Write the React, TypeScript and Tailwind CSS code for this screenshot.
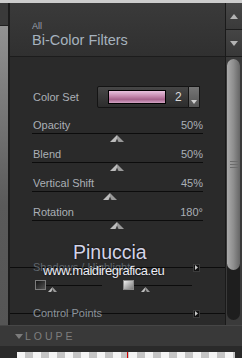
import React from "react";

function Tri({ w = 14, h = 7 }: { w?: number; h?: number }) {
  const m = w / 2;
  return (
    <svg width={w} height={h} viewBox={`0 0 ${w} ${h}`} className="block">
      <polygon points={`0,${h} ${m},0 ${m},${h}`} fill="#bcbcbc" />
      <polygon points={`${m},0 ${w},${h} ${m},${h}`} fill="#999999" />
      <polygon points={`${m - 1.5},${h} ${m},${h / 2} ${m + 1.5},${h}`} fill="#3a3a3a" />
    </svg>
  );
}

function Play() {
  return (
    <div className="flex h-[8px] w-[7px] items-center justify-center border border-[#3c3c3c] bg-[#121212]">
      <svg width="3" height="5" viewBox="0 0 3 5" className="block">
        <polygon points="0,0 3,2.5 0,5" fill="#c8c8c8" />
      </svg>
    </div>
  );
}

function SliderRow({ label, value, pos }: { label: string; value: string; pos: number }) {
  return (
    <div className="flex h-[29px] flex-col px-[22px]">
      <div className="flex h-[13px] justify-between pl-px text-[11px] leading-[13px] text-[#aab0b6]">
        <span>{label}</span>
        <span>{value}</span>
      </div>
      <div className="mt-px h-px bg-[#0c0c0c]" />
      <div className="mt-px flex">
        <div style={{ marginLeft: pos }}>
          <Tri />
        </div>
      </div>
    </div>
  );
}

export default function App() {
  return (
    <div className="flex h-[358px] w-[242px] flex-col overflow-hidden bg-[#2a2a2a] font-['Liberation_Sans',Arial,sans-serif]">
      <div className="h-[3px] bg-[#cdcdcd]" />
      <div className="flex h-[322px]">
        {/* left strip */}
        <div className="flex w-[10px] flex-col border-r-2 border-[#1c1c1c]">
          <div className="h-[23px] border-b border-[#202020] bg-[#3a3a3a]" />
          <div className="flex-1 bg-[linear-gradient(to_bottom,#929292,#5a5a5a_60%,#555555)]" />
        </div>
        {/* main panel */}
        <div className="relative flex w-[215px] flex-col">
          <div className="h-[54px] border-b border-[#1c1c1c] bg-gradient-to-b from-[#3a3a3a] to-[#303030] pl-[22px] pt-[18px]">
            <div className="h-[10px] text-[9px] leading-[10px] text-[#9aa4ae]">All</div>
            <div className="mt-px h-[17px] text-[14.5px] leading-[17px] text-[#a6b2be]">Bi-Color Filters</div>
          </div>
          <div className="flex flex-1 flex-col bg-[#2a2a2a] pt-[29px]">
            {/* Color set */}
            <div className="flex h-[22px] items-center pl-[23px]">
              <div className="w-[64px] text-[11px] leading-[13px] text-[#aab0b6]">Color Set</div>
              <div className="flex h-[22px] w-[92px] items-center rounded-l-[2px] border border-[#141414] bg-gradient-to-b from-[#474747] to-[#2c2c2c] pl-[10px]">
                <div className="h-[14px] w-[58px] border border-black bg-[linear-gradient(to_bottom,#e8c2df,#c88eb2_40%,#a8648e_70%,#d2a4c4)]" />
                <span className="ml-[9px] text-[12px] leading-[14px] text-[#dadada]">2</span>
              </div>
              <div className="flex h-[22px] w-[11px] items-end justify-center border-y border-r border-[#141414] bg-gradient-to-b from-[#767676] to-[#545454] pb-[3px]">
                <svg width="6" height="4" viewBox="0 0 6 4" className="block">
                  <polygon points="0,0 6,0 3,4" fill="#cfcfcf" />
                </svg>
              </div>
            </div>
            <div className="mt-[11px] flex flex-col">
              <SliderRow label="Opacity" value="50%" pos={78} />
              <SliderRow label="Blend" value="50%" pos={78} />
              <SliderRow label="Vertical Shift" value="45%" pos={71} />
              <SliderRow label="Rotation" value="180°" pos={78} />
            </div>
            {/* Shadows / Highlights header */}
            <div className="mt-[26px] flex h-[13px] items-center justify-between bg-[linear-gradient(to_bottom,transparent_6px,#0c0c0c_6px,#0c0c0c_7px,transparent_7px)] pl-[23px] pr-[25px]">
              <span className="text-[11px] leading-[13px] text-[#60676e]">Shadows / Highlights</span>
              <Play />
            </div>
            {/* shadows controls */}
            <div className="mt-[6px] flex h-[13px] items-start pl-[25px]">
              <div className="h-[10px] w-[11px] border border-[#7c7c7c] bg-gradient-to-br from-[#151515] to-[#555555]" />
              <div className="flex w-[56px] flex-col pt-[5px]">
                <div className="h-px bg-[#0c0c0c]" />
                <div className="ml-[2px] mt-px">
                  <Tri w={9} h={5} />
                </div>
              </div>
              <div className="ml-[21px] h-[10px] w-[11px] border border-[#8a8a8a] bg-gradient-to-br from-[#eeeeee] to-[#7a7a7a]" />
              <div className="flex w-[58px] flex-col pt-[5px]">
                <div className="h-px bg-[#0c0c0c]" />
                <div className="ml-[7px] mt-px">
                  <Tri w={9} h={5} />
                </div>
              </div>
            </div>
            {/* Control points */}
            <div className="mt-[14px] flex h-[13px] items-center justify-between bg-[linear-gradient(to_bottom,transparent_6px,#0c0c0c_6px,#0c0c0c_7px,transparent_7px)] pl-[23px] pr-[25px]">
              <span className="text-[11px] leading-[13px] text-[#8c939a]">Control Points</span>
              <Play />
            </div>
          </div>
          {/* watermark overlay */}
          <div className="pointer-events-none absolute left-[63px] top-[238px] h-[22px] text-[19.5px] leading-[22px] text-[#d4d4e8] [text-shadow:0_0_2px_#000]">
            Pinuccia
          </div>
          <div className="pointer-events-none absolute left-[33px] top-[260px] h-[15px] text-[13px] leading-[15px] tracking-[-0.45px] text-[#ececf4] [text-shadow:0_0_2px_#000]">
            www.maidiregrafica.eu
          </div>
        </div>
        {/* scrollbar */}
        <div className="flex w-[17px] flex-col border-l border-[#1a1a1a] bg-[#3a3a3a]">
          <div className="flex h-[27px] items-center justify-center border-b border-[#1c1c1c] bg-gradient-to-b from-[#474747] to-[#3a3a3a]">
            <svg width="8" height="5" viewBox="0 0 8 5" className="block">
              <polygon points="0,5 4,0 8,5" fill="#b4b4b4" />
            </svg>
          </div>
          <div className="flex h-[27px] items-center justify-center border-b border-[#1c1c1c] bg-gradient-to-b from-[#454545] to-[#383838]">
            <svg width="8" height="5" viewBox="0 0 8 5" className="block">
              <polygon points="0,0 8,0 4,5" fill="#b4b4b4" />
            </svg>
          </div>
          <div className="flex flex-1 pb-[5px] pl-px pr-[2px] pt-[2px]">
            <div className="flex w-[13px] flex-col rounded-full bg-[#1e1e1e]">
              <div className="flex h-[211px] flex-col items-center justify-center gap-[2px] rounded-full bg-gradient-to-r from-[#ababab] via-[#8e8e8e] to-[#666666]">
                <div className="h-px w-[8px] bg-[#6c6c6c]" />
                <div className="h-px w-[8px] bg-[#6c6c6c]" />
                <div className="h-px w-[8px] bg-[#6c6c6c]" />
              </div>
            </div>
          </div>
        </div>
      </div>
      {/* Loupe bar */}
      <div className="flex h-[21px] items-center border-t border-[#464646] bg-[#393939] pl-[15px]">
        <svg width="8" height="5" viewBox="0 0 8 5" className="block">
          <polygon points="0,0 8,0 4,5" fill="#7c7c7c" />
        </svg>
        <span className="ml-[2px] text-[10.5px] leading-[12px] tracking-[3px] text-[#7e7e7e]">LOUPE</span>
      </div>
      <div className="mt-[6px] flex h-[6px] pl-[17px] pr-[7px]">
        <div className="relative flex-1 bg-[repeating-linear-gradient(90deg,#f4f4f4_0_8px,#c4c4c4_8px_16px)]">
          <div className="absolute left-[110px] top-0 h-full w-px bg-[#d40000]" />
        </div>
      </div>
    </div>
  );
}
